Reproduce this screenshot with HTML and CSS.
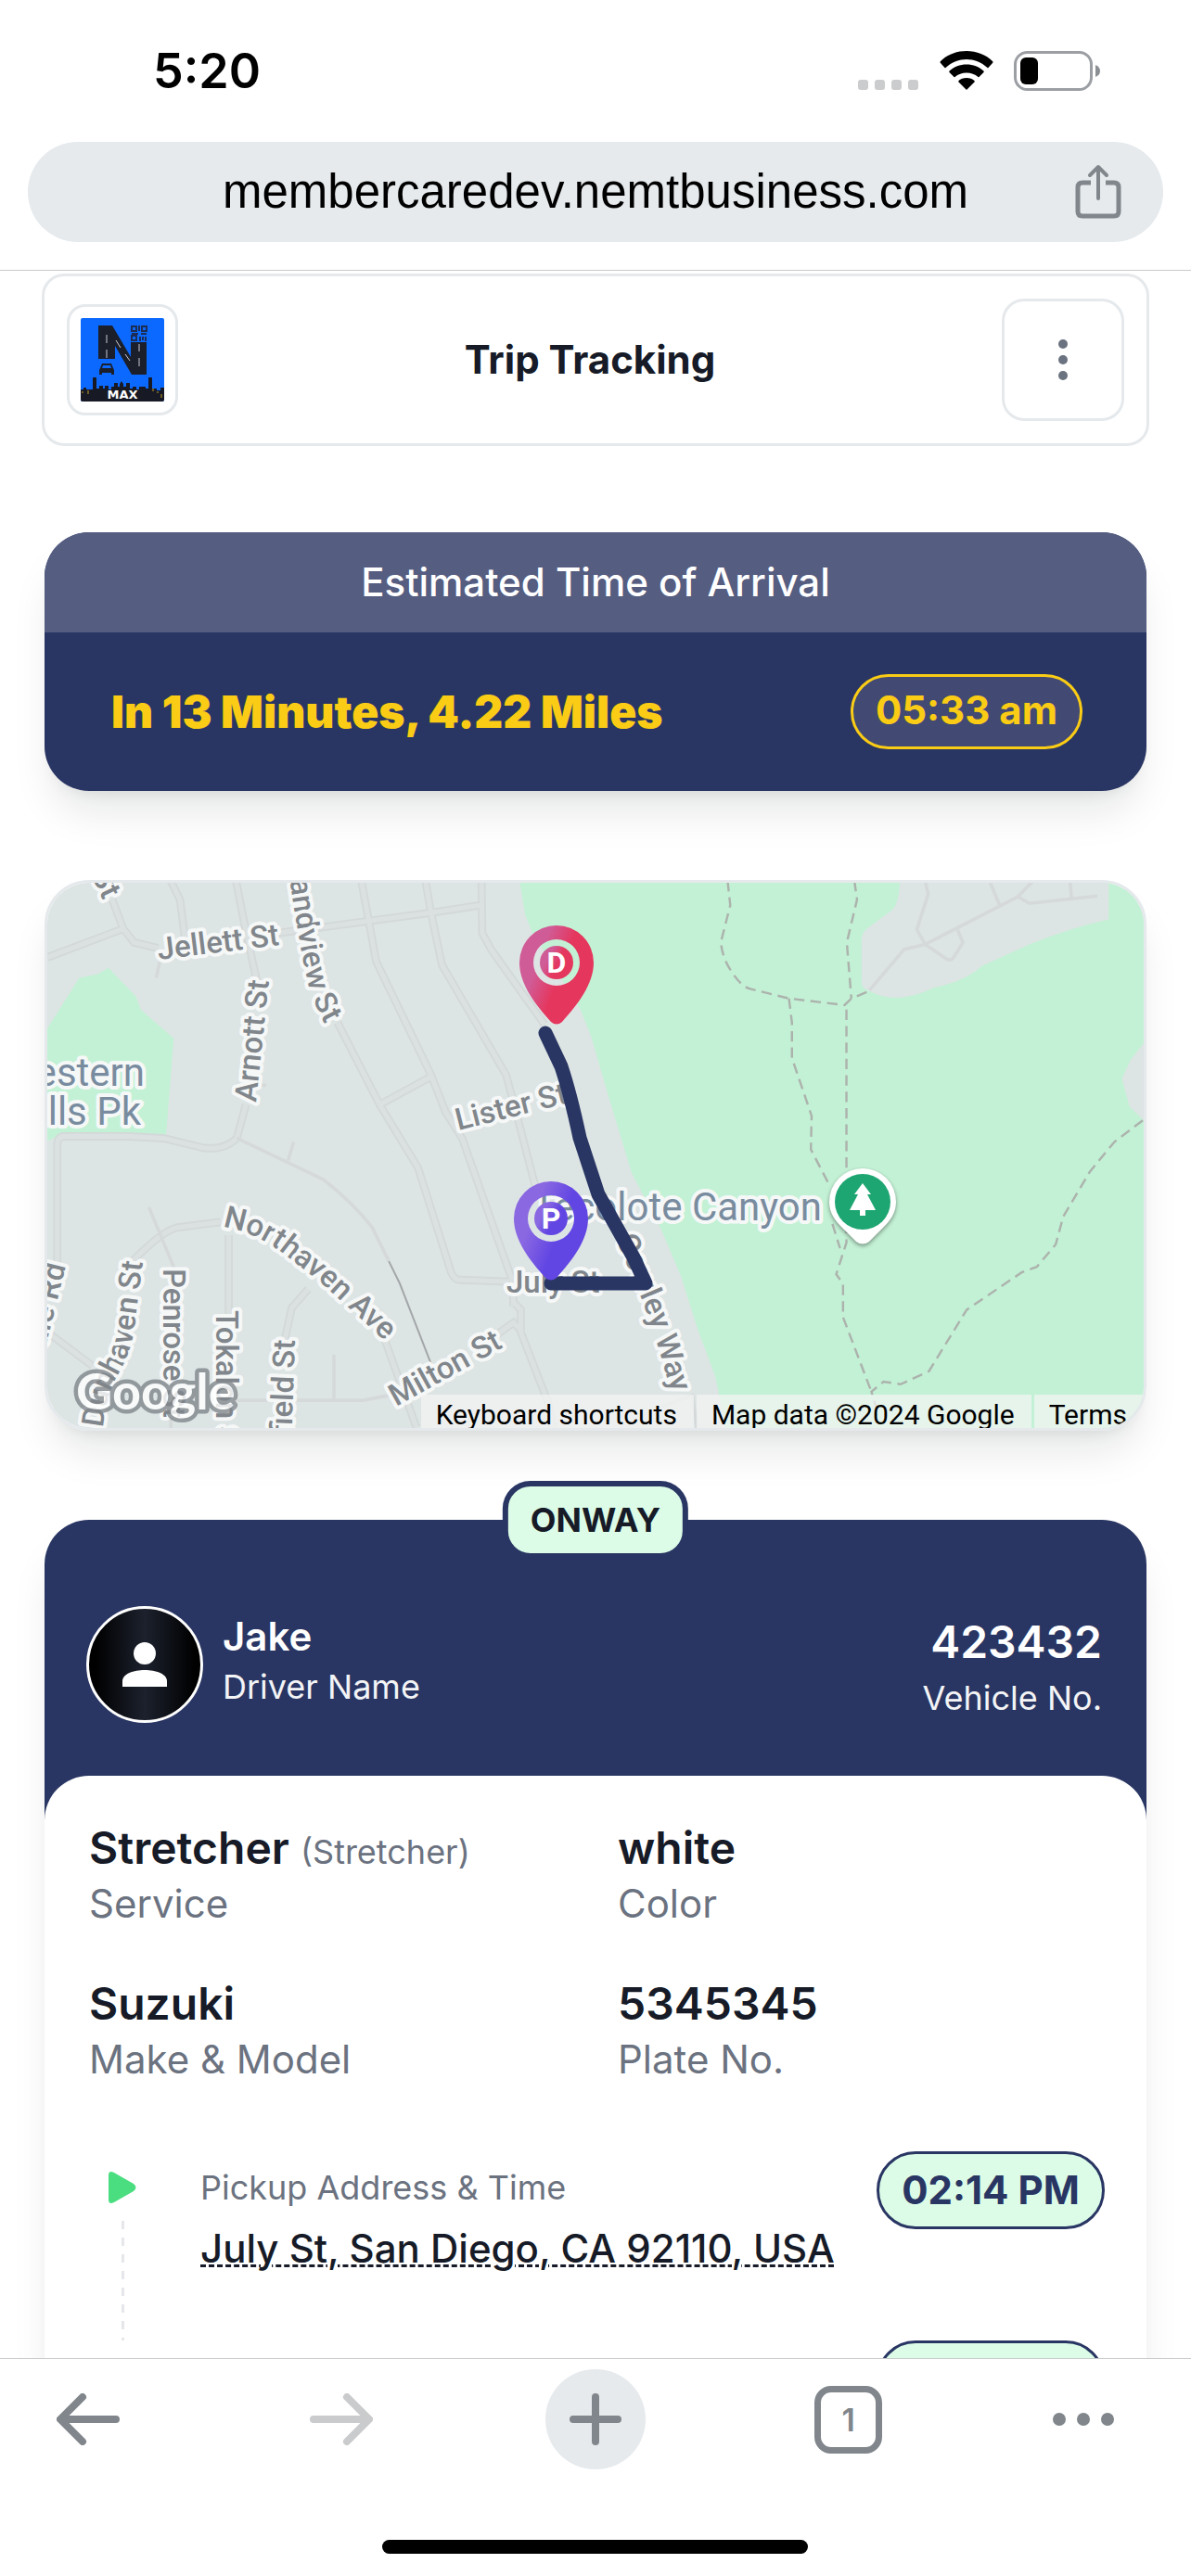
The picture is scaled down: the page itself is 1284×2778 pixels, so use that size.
FILE: index.html
```html
<!DOCTYPE html>
<html lang="en">
  <head>
    <meta charset="UTF-8" />
    <meta name="viewport" content="width=device-width, initial-scale=1.0" />
    <title>Trip Tracking</title>
    <link rel="stylesheet" href="styles.css">
  </head>
  <body>
    <div class="status-bar">
      <span class="clock">5:20</span>
      <div class="status-icons">
        <svg class="signal" viewBox="0 0 66 12" width="66" height="12">
          <rect x="0" width="11" height="11" rx="3" />
          <rect x="18" width="11" height="11" rx="3" />
          <rect x="36" width="11" height="11" rx="3" />
          <rect x="54" width="11" height="11" rx="3" />
        </svg>
        <svg class="wifi" viewBox="0 0 58 43" width="58" height="43">
          <path d="M29 0C40 0 50 4 57 11Q58 12 57 13L52.500 18Q52 18.500 51.500 18C45 12 37 9 29 9S13 12 6.500 18Q6 18.500 5.500 18L1 13Q0 12 1 11C8 4 18 0 29 0Z" />
          <path d="M29 14.500C36 14.500 42.500 17 47.500 21.500Q48 22.500 47.500 23L42.500 28Q42 28.500 41.500 28C38 25 34 23.500 29 23.500S20 25 16.500 28Q16 28.500 15.500 28L10.500 23Q10 22.500 10.500 21.500C15.500 17 22 14.500 29 14.500Z" />
          <path d="M29 29C32.500 29 35.500 30 37.500 32Q38 33 37.500 33.500L29.500 41.500Q29 42 28.500 41.500L20.500 33.500Q20 33 20.500 32C22.500 30 25.500 29 29 29Z" />
        </svg>
        <svg class="battery" viewBox="0 0 94 43" width="94" height="43">
          <rect x="1.500" y="1.500" width="82" height="40" rx="13" fill="none" stroke="#9b9ea3" stroke-width="3" />
          <rect x="7" y="7" width="19" height="29" rx="6" fill="#000" />
          <path d="M88 15Q93 17 93 21.500T88 28Z" fill="#8b8e93" />
        </svg>
      </div>
    </div>

    <div class="address-bar">
      <span class="url">membercaredev.nemtbusiness.com</span>
      <button class="share-btn" aria-label="Share">
        <svg viewBox="0 0 50 60" width="50" height="60" fill="none" stroke="#80868b" stroke-width="5" stroke-linecap="butt" stroke-linejoin="round">
          <path d="M17 20H8Q3 20 3 25V51Q3 56 8 56H42Q47 56 47 51V25Q47 20 42 20H33" />
          <path stroke-width="4" stroke-linecap="round" d="M25 37V4M16 12L25 3L34 12" />
        </svg>
      </button>
    </div>

    <main class="page">
      <header class="header">
        <div class="logo-box">
          <svg class="logo" viewBox="0 0 90 90">
            <rect width="90" height="90" rx="2" fill="#0b69ff" />
            <path d="M19 8H34L54 42V26H71V61H55L37 30V44H19Z" fill="#1b1f2b" />
            <path d="M28 18V27M28 34V43M38 24L43 32M48 39L53 46M63 28V36M63 43V52" stroke="#c9ccd2" stroke-width="1" />
            <g fill="none" stroke="#1b2c55" stroke-width="2">
              <rect x="55" y="9" width="5" height="5" />
              <rect x="66" y="9" width="5" height="5" />
              <rect x="55" y="19" width="5" height="5" />
              <path d="M63 8V14M55 17H62M65 17H71M64 20V25M67 20V24M70 20V25" />
            </g>
            <path d="M23 49H33L35 54L36 56V61H33V59H23V61H20V56L21 54Z" fill="#1b1f2b" />
            <path d="M24 51H32L33 54H23Z" fill="#0b69ff" />
            <path d="M0 77H3V75H6V77H13V64H17V76H20V73H24V76H26V73H30V77H33V74H36V70H40V74H42V71L44 68L46 71V74H49V70H53V76H56V74H60V77H63V74H70V76H73V64H77V76H82V78H86V75H90V88Q90 90 88 90H2Q0 90 0 88Z" fill="#171a25" />
            <path d="M1 80H3M8 78V82M82 80H84M87 82V86M78 76V79" stroke="#c29a24" stroke-width="1" />
            <text x="45" y="87" text-anchor="middle" font-size="13" class="logo-text">MAX</text>
          </svg>
        </div>
        <h1 class="title">Trip Tracking</h1>
        <button class="menu-btn" aria-label="Menu">
          <svg viewBox="0 0 10 44" width="10" height="44" fill="#6b7280">
            <circle cx="5" cy="5" r="5" />
            <circle cx="5" cy="22" r="5" />
            <circle cx="5" cy="39" r="5" />
          </svg>
        </button>
      </header>

      <section class="eta-card">
        <h2 class="eta-title">Estimated Time of Arrival</h2>
        <div class="eta-body">
          <strong class="eta-text">In 13 Minutes, 4.22 Miles</strong>
          <span class="chip chip-yellow">05:33 am</span>
        </div>
      </section>

      <section class="map">
        <svg class="map-canvas" viewBox="0 0 1182 588" preserveAspectRatio="xMidYMid slice">
          <defs>
            <linearGradient id="dropGradient" x1="0" y1="0.1" x2="1" y2="0.6">
              <stop offset="0.3" stop-color="#d05c97" />
              <stop offset="0.6" stop-color="#e5365d" />
            </linearGradient>
            <linearGradient id="pickGradient" x1="0" y1="0.1" x2="1" y2="0.6">
              <stop offset="0.3" stop-color="#8a68e2" />
              <stop offset="0.65" stop-color="#6246e3" />
            </linearGradient>
            <g id="streets">
              <path d="M28 255L235 178M205 100L235 178L265 215L330 230" />
              <path d="M365 50L390 100L403 200M543 50L565 160L600 320" />
              <path d="M655 190L1075 135L1210 115" />
              <path d="M885 50L905 155L925 265L1075 570L1115 670L1160 740L1300 1130V1190" />
              <path d="M1060 50L1075 135L1105 275L1280 570L1310 680L1360 870" />
              <path d="M1213 50L1215 190L1240 235L1385 435" />
              <path d="M820 430L935 650L1040 820L1130 1100Q1138 1120 1155 1120L1290 1125M935 650L1075 575" />
              <path d="M55 1090V760Q55 735 75 735H245L345 740L450 765Q510 775 545 740L570 650" />
              <path d="M500 965L380 980Q340 990 260 1070M523 1000V1210M740 1145L695 1195L675 1285" />
              <path d="M28 1260L150 1350M945 1270L1035 1515" />
              <path d="M1300 1180L1320 1200V1260L1395 1450L1410 1530M1250 1270L1300 1235L1325 1260" />
            </g>
            <path id="grandview" d="M257 -36Q269 56 282 113Q289 135 307 166" />
            <path id="northaven" d="M189 371Q222 376 252 398L296 432L366 496" />
            <path id="dunhaven" d="M60 588Q63 552 78 527Q93 500 95 470L104 400" />
            <path id="cowley" d="M613 384L642 452Q656 490 667 530L684 580" />
          </defs>

          <rect x="-3" y="-3" width="1190" height="596" fill="#dde4e4" />

          <g transform="translate(-3 -3)">
            <path d="M512 0L518 37L526 57L577 138L589 168L607 230L633 316L664 375L686 427L705 487L723 535L735 594H1188V0Z" class="park" />

            <g transform="translate(-8 -19) scale(.395 .402)">
              <path d="M0 480L28 445L115 310L165 300L195 283L270 360L283 395L373 472L352 730L245 725H75L28 748H0Z" class="park" />
              <use href="#streets" class="road-edge" />
              <use href="#streets" class="road" />
              <path class="lane" d="M545 740L780 850Q860 910 915 980L960 1070M685 800L700 750M325 310L335 265M560 598H625M305 925L375 1090M520 1443H890L960 1430M810 1320V1443M365 1480V1540" />
              <path class="rail" d="M960 1070L990 1130L1085 1370" />
            </g>

            <g transform="translate(572 -19) scale(.408 .402)">
              <path class="land" d="M858 45Q858 110 835 130L775 175Q757 190 757 205V320Q757 340 778 345Q850 385 945 337Q1030 320 1075 278L1200 220Q1310 175 1410 153V45ZM1510 475L1468 530L1445 580L1465 655L1510 700Z" />
              <path class="lane" d="M778 343L870 233L925 220L1170 92L1210 50M925 50L933 85L903 180L925 220L980 258Q995 268 1003 250L1025 215L1010 180M1095 50L1122 115M1170 92L1200 110L1380 90M1308 50L1312 103M230 1460L310 1430L325 1540" />
              <path class="trail" d="M403 50L410 115L385 215Q390 260 415 295Q440 335 465 340L565 365L712 383L730 365L778 345" />
              <path class="trail" d="M738 50L745 100L718 215L730 365M565 365L573 430V525L625 680L623 770L670 862" />
              <path class="trail" d="M717 395V1020L690 1105L708 1130V1220L783 1420M680 970L700 1035" />
              <path class="trail" d="M1500 692L1425 750L1360 830L1290 950L1270 1025L1220 1085L1180 1100L1035 1200L935 1365L860 1400L815 1393L783 1420L795 1460" />
            </g>
          </g>

          <g class="street-names">
            <text transform="translate(47 -9) rotate(65)">St</text>
            <text transform="translate(120 83) rotate(-7)">Jellett St</text>
            <text><textPath href="#grandview">Grandview St</textPath></text>
            <text transform="translate(225 237) rotate(-84)">Arnott St</text>
            <text transform="translate(443 267) rotate(-14)">Lister St</text>
            <text x="495" y="442">July St</text>
            <text><textPath href="#northaven">Northaven Ave</textPath></text>
            <text><textPath href="#dunhaven">Dunhaven St</textPath></text>
            <text transform="translate(125 416) rotate(90)">Penrose St</text>
            <text transform="translate(182 461) rotate(90)">Tokalon St</text>
            <text transform="translate(267 493) rotate(-88)" text-anchor="end">Garfield St</text>
            <text transform="translate(20 413) rotate(-76)" text-anchor="end">Dale Rd</text>
            <text transform="translate(376 565) rotate(-29)">Milton St</text>
            <text><textPath href="#cowley">Cowley Way</textPath></text>
          </g>
          <g class="park-names">
            <text x="105" y="219" text-anchor="end">Western</text>
            <text x="101" y="261" text-anchor="end">Hills Pk</text>
            <text x="835" y="364" text-anchor="end">Tecolote Canyon</text>
          </g>

          <!-- park marker -->
          <g class="park-pin" transform="translate(879 344)">
            <path d="M-36 0A36 36 0 1 1 36 0C36 12 30 20 22 28L7 43Q0 48 -7 43L-22 28C-30 20 -36 12 -36 0Z" fill="#fff" />
            <circle r="30" fill="#1ea672" />
            <path d="M0 -20L9 -8H5L14 9H3V15H-3V9H-14L-5 -8H-9Z" fill="#fff" />
          </g>

          <path class="route" d="M537 162L554 198Q564 228 574 275L594 336L632 404L645 432H543" />

          <g transform="translate(549 86)">
            <path fill="url(#dropGradient)" fill-rule="evenodd" d="M-40 0A40 40 0 1 1 40 0C40 24 22 46 6 64Q0 69 -6 64C-22 46 -40 24 -40 0ZM-25 0A25 25 0 1 0 25 0A25 25 0 1 0 -25 0Z" />
            <circle r="18" fill="url(#dropGradient)" />
            <text class="pin-letter" y="11">D</text>
          </g>
          <g transform="translate(543 362)">
            <path fill="url(#pickGradient)" fill-rule="evenodd" d="M-40 0A40 40 0 1 1 40 0C40 24 22 46 6 64Q0 69 -6 64C-22 46 -40 24 -40 0ZM-25 0A25 25 0 1 0 25 0A25 25 0 1 0 -25 0Z" />
            <circle r="18" fill="url(#pickGradient)" />
            <text class="pin-letter" y="11">P</text>
          </g>

          <text class="google" x="31" y="568">Google</text>
        </svg>
        <div class="map-footer">
          <button class="map-link">Keyboard shortcuts</button>
          <span class="map-link">Map data ©2024 Google</span>
          <a class="map-link" href="#">Terms</a>
        </div>
      </section>

      <section class="trip-card">
        <span class="status-badge">ONWAY</span>
        <div class="driver-row">
          <div class="avatar">
            <svg viewBox="0 0 48 48" width="48" height="48" fill="#fff">
              <circle cx="24" cy="12" r="12" />
              <path d="M0 48V42C0 34 12 30 24 30S48 34 48 42V48Z" />
            </svg>
          </div>
          <div class="driver">
            <p class="driver-name">Jake</p>
            <p class="driver-label">Driver Name</p>
          </div>
          <div class="vehicle">
            <p class="vehicle-no">423432</p>
            <p class="driver-label">Vehicle No.</p>
          </div>
        </div>

        <div class="trip-body">
          <dl class="details">
            <div class="detail">
              <dt>Service</dt>
              <dd>Stretcher <small>(Stretcher)</small></dd>
            </div>
            <div class="detail">
              <dt>Color</dt>
              <dd>white</dd>
            </div>
            <div class="detail">
              <dt>Make &amp; Model</dt>
              <dd>Suzuki</dd>
            </div>
            <div class="detail">
              <dt>Plate No.</dt>
              <dd>5345345</dd>
            </div>
          </dl>

          <div class="stops">
            <div class="stop">
              <div class="stop-track">
                <svg viewBox="0 0 32 36" width="32" height="36">
                  <path d="M1 5Q1 -1 7 2L28 14Q33 18 28 22L7 34Q1 37 1 31Z" fill="#4ade80" />
                </svg>
                <svg class="stop-line" width="3" height="129">
                  <path d="M1.500 0V129" />
                </svg>
              </div>
              <div class="stop-info">
                <p class="stop-label">Pickup Address &amp; Time</p>
                <a class="stop-address" href="#">July St, San Diego, CA 92110, USA</a>
              </div>
              <span class="chip chip-green">02:14 PM</span>
            </div>
            <div class="stop">
              <span class="chip chip-green"></span>
            </div>
          </div>
        </div>
      </section>
    </main>

    <nav class="toolbar">
      <div class="toolbar-buttons">
        <button class="tool-btn" aria-label="Back">
          <svg viewBox="0 0 68 56" width="68" height="56" fill="none" stroke="#80868b" stroke-width="8" stroke-linecap="round" stroke-linejoin="round">
            <path d="M64 28H5M28 4L4 28L28 52" />
          </svg>
        </button>
        <button class="tool-btn" aria-label="Forward">
          <svg viewBox="0 0 68 56" width="68" height="56" fill="none" stroke="#c9cbcd" stroke-width="8" stroke-linecap="round" stroke-linejoin="round">
            <path d="M4 28H63M40 4L64 28L40 52" />
          </svg>
        </button>
        <button class="tool-btn new-tab" aria-label="New tab">
          <svg viewBox="0 0 56 56" width="56" height="56" fill="none" stroke="#80868b" stroke-width="8" stroke-linecap="round">
            <path d="M28 4V52M4 28H52" />
          </svg>
        </button>
        <button class="tool-btn" aria-label="Tabs"><span class="tab-count">1</span></button>
        <button class="tool-btn more" aria-label="More">
          <svg viewBox="0 0 68 16" width="68" height="16" fill="#80868b">
            <circle cx="8" cy="8" r="7" />
            <circle cx="34" cy="8" r="7" />
            <circle cx="60" cy="8" r="7" />
          </svg>
        </button>
      </div>
      <div class="home-indicator"></div>
    </nav>
  </body>
</html>
```
FILE: styles.css
```css
* {
  box-sizing: border-box;
}

body {
  margin: 0;
  height: 100vh;
  display: flex;
  flex-direction: column;
  overflow: hidden;
  background: #fff;
  color: #161b27;
  font-family: Inter, 'Liberation Sans', sans-serif;
}

h1,
h2,
p,
dl,
dd {
  margin: 0;
}

button {
  margin: 0;
  padding: 0;
  border: none;
  background: none;
  font-family: inherit;
  color: inherit;
  cursor: pointer;
}

svg {
  display: block;
}

/* status bar */
.status-bar {
  display: flex;
  justify-content: space-between;
  align-items: center;
  height: 153px;
  padding: 0 97px 0 165px;
  flex-shrink: 0;
}

.clock {
  font-size: 52px;
  font-weight: 600;
  line-height: 60px;
  color: #000;
}

.status-icons {
  display: flex;
  align-items: center;
  gap: 22px;
}

.signal {
  align-self: flex-end;
  fill: #cbcccd;
}

/* url bar */
.address-bar {
  display: flex;
  align-items: center;
  height: 108px;
  margin: 0 30px 30px;
  padding: 0 45px;
  border-radius: 54px;
  background: #e6eaed;
  flex-shrink: 0;
}

.url {
  flex: 1;
  padding-left: 50px;
  text-align: center;
  font-family: 'Liberation Sans', Arial, sans-serif;
  font-size: 51px;
  line-height: 60px;
  color: #000;
}

/* page */
.page {
  flex: 1;
  min-height: 0;
  overflow: hidden;
  padding: 3px 48px 0;
  border-top: 1px solid #c8cacc;
}

.header {
  display: flex;
  align-items: center;
  justify-content: space-between;
  margin: 0 -3px 93px;
  padding: 24px;
  border: 3px solid #e5e9ec;
  border-radius: 24px;
}

.logo-box {
  width: 120px;
  padding: 12px;
  border: 3px solid #e5e9ec;
  border-radius: 20px;
}

.logo-text {
  font-family: 'DejaVu Sans', sans-serif;
  font-weight: 700;
  fill: #fff;
}

.title {
  font-size: 42px;
  font-weight: 700;
  line-height: 60px;
}

.menu-btn {
  display: flex;
  align-items: center;
  justify-content: center;
  width: 132px;
  height: 132px;
  border: 3px solid #e5e9ec;
  border-radius: 24px;
}

.eta-card,
.map,
.trip-card {
  border-radius: 48px;
  box-shadow: 0 30px 45px -9px rgba(0, 20, 20, 0.1), 0 12px 18px -12px rgba(0, 20, 20, 0.1);
}

.eta-card {
  overflow: hidden;
  margin-bottom: 96px;
  background: #293663;
}

.eta-title {
  padding: 24px;
  background: #555d81;
  color: #fff;
  text-align: center;
  font-size: 42px;
  font-weight: 500;
  line-height: 60px;
}

.eta-body {
  display: flex;
  align-items: center;
  justify-content: space-between;
  padding: 45px 69px 45px 72px;
}

.eta-text {
  font-size: 48px;
  font-weight: 900;
  line-height: 60px;
  color: #facc15;
}

.chip {
  border: 3px solid;
  border-radius: 42px;
  font-size: 42px;
  line-height: 60px;
  text-align: center;
}

.chip-yellow {
  padding: 6px 24px 9px;
  background: #424a73;
  color: #facc15;
  font-weight: 700;
}

.chip-green {
  min-width: 246px;
  min-height: 84px;
  padding: 9px 24px;
  background: #dcfce7;
  color: #293663;
  font-weight: 700;
}

/* map */
.map {
  position: relative;
  overflow: hidden;
  margin-bottom: 96px;
  border: 3px solid #e5e9ec;
}

.map-canvas {
  width: 100%;
}

.park {
  fill: #c3f1d5;
}

.land {
  fill: #dde4e4;
}

.road-edge,
.road,
.lane,
.rail,
.trail,
.route {
  fill: none;
}

.road-edge {
  stroke: #d3d8d8;
  stroke-width: 22;
}

.road {
  stroke: #dbe0e0;
  stroke-width: 13;
}

.lane {
  stroke: #d5d9d9;
  stroke-width: 9;
}

.rail {
  stroke: #a3a7a9;
  stroke-width: 5;
}

.trail {
  stroke: #acb3ad;
  stroke-width: 6;
  stroke-dasharray: 28 16;
}

.route {
  stroke: #293663;
  stroke-width: 15;
  stroke-linecap: round;
  stroke-linejoin: round;
}

.street-names,
.park-names {
  font-family: Roboto, sans-serif;
  stroke: #f6f8f8;
  stroke-width: 8;
  stroke-linejoin: round;
  paint-order: stroke;
}

.street-names {
  font-size: 33px;
  font-weight: 500;
  fill: #80868b;
}

.park-names {
  font-size: 42px;
  fill: #798c9f;
}

.park-pin {
  filter: drop-shadow(0 2px 2px rgba(0, 0, 0, 0.4));
}

.pin-letter {
  font-family: Roboto, sans-serif;
  font-size: 32px;
  font-weight: 700;
  text-anchor: middle;
  fill: #fff;
}

.google {
  font-family: Lato, sans-serif;
  font-size: 54px;
  font-weight: 700;
  fill: #fff;
  stroke: #80868b;
  stroke-width: 9;
  stroke-linejoin: round;
  paint-order: stroke;
  opacity: 0.8;
}

.map-footer {
  position: absolute;
  right: 0;
  bottom: 0;
  display: flex;
  gap: 3px;
  height: 36px;
  overflow: hidden;
}

.map-link {
  padding: 0 18px 0 16px;
  background: rgba(245, 245, 245, 0.7);
  color: #000;
  font-family: Roboto, sans-serif;
  font-size: 30px;
  line-height: 44px;
  text-decoration: none;
}

/* trip card */
.trip-card {
  position: relative;
  background: #293663;
}

.status-badge {
  position: absolute;
  top: -42px;
  left: 50%;
  transform: translateX(-50%);
  padding: 12px 24px;
  border: 6px solid #293663;
  border-radius: 30px;
  background: #dcfce7;
  font-size: 36px;
  font-weight: 700;
  line-height: 48px;
}

.driver-row {
  display: flex;
  align-items: center;
  padding: 93px 48px 57px 45px;
}

.avatar {
  display: flex;
  align-items: center;
  justify-content: center;
  width: 126px;
  height: 126px;
  border: 3px solid #fff;
  border-radius: 50%;
  background: linear-gradient(90deg, #000 5%, #1c212d, #000 95%);
}

.driver {
  flex: 1;
  padding: 0 0 12px 21px;
  color: #fff;
}

.driver-name {
  font-size: 42px;
  font-weight: 600;
  line-height: 60px;
}

.driver-label {
  font-size: 36px;
  line-height: 48px;
  color: #f3f4f6;
}

.vehicle {
  color: #fff;
  text-align: right;
}

.vehicle-no {
  font-size: 48px;
  font-weight: 600;
  line-height: 72px;
}

.trip-body {
  padding: 48px 45px 96px 48px;
  border-radius: 48px;
  background: #fff;
}

.details {
  display: grid;
  grid-template-columns: 1fr 1fr;
  gap: 48px;
  padding-right: 3px;
}

.detail {
  display: flex;
  flex-direction: column-reverse;
}

.detail dd {
  font-size: 48px;
  font-weight: 600;
  line-height: 60px;
}

.detail small {
  font-size: 36px;
  font-weight: 400;
  line-height: 48px;
  color: #6b7280;
}

.detail dt {
  font-size: 42px;
  line-height: 60px;
  color: #6b7280;
}

.stops {
  padding-top: 69px;
}

.stop {
  display: flex;
  align-items: flex-start;
  justify-content: flex-end;
  min-height: 204px;
}

.stop-track {
  display: flex;
  flex-direction: column;
  align-items: center;
  gap: 18px;
  width: 72px;
  padding-top: 21px;
}

.stop-line {
  stroke: #e5e7eb;
  stroke-width: 3;
  stroke-dasharray: 9 9;
}

.stop-info {
  flex: 1;
  padding: 15px 0 0 48px;
}

.stop-label {
  margin-bottom: 12px;
  font-size: 36px;
  line-height: 48px;
  color: #6b7280;
}

.stop-address {
  color: inherit;
  font-size: 42px;
  font-weight: 500;
  line-height: 60px;
  text-decoration: underline dashed 3px;
}

/* browser toolbar */
.toolbar {
  display: flex;
  flex-direction: column;
  align-items: center;
  justify-content: space-between;
  height: 235px;
  padding: 11px 42px 24px 41px;
  border-top: 1px solid #c8cacc;
  background: #fff;
  flex-shrink: 0;
}

.toolbar-buttons {
  display: flex;
  justify-content: space-between;
  width: 100%;
}

.tool-btn {
  display: flex;
  align-items: center;
  justify-content: center;
  width: 108px;
  height: 108px;
  border-radius: 50%;
}

.new-tab {
  background: #e6eaed;
}

.more {
  justify-content: flex-start;
}

.tab-count {
  width: 73px;
  height: 73px;
  border: 7px solid #80868b;
  border-radius: 18px;
  color: #80868b;
  font-size: 34px;
  font-weight: 600;
  line-height: 60px;
}

.home-indicator {
  width: 459px;
  height: 15px;
  border-radius: 8px;
  background: #000;
}
```
